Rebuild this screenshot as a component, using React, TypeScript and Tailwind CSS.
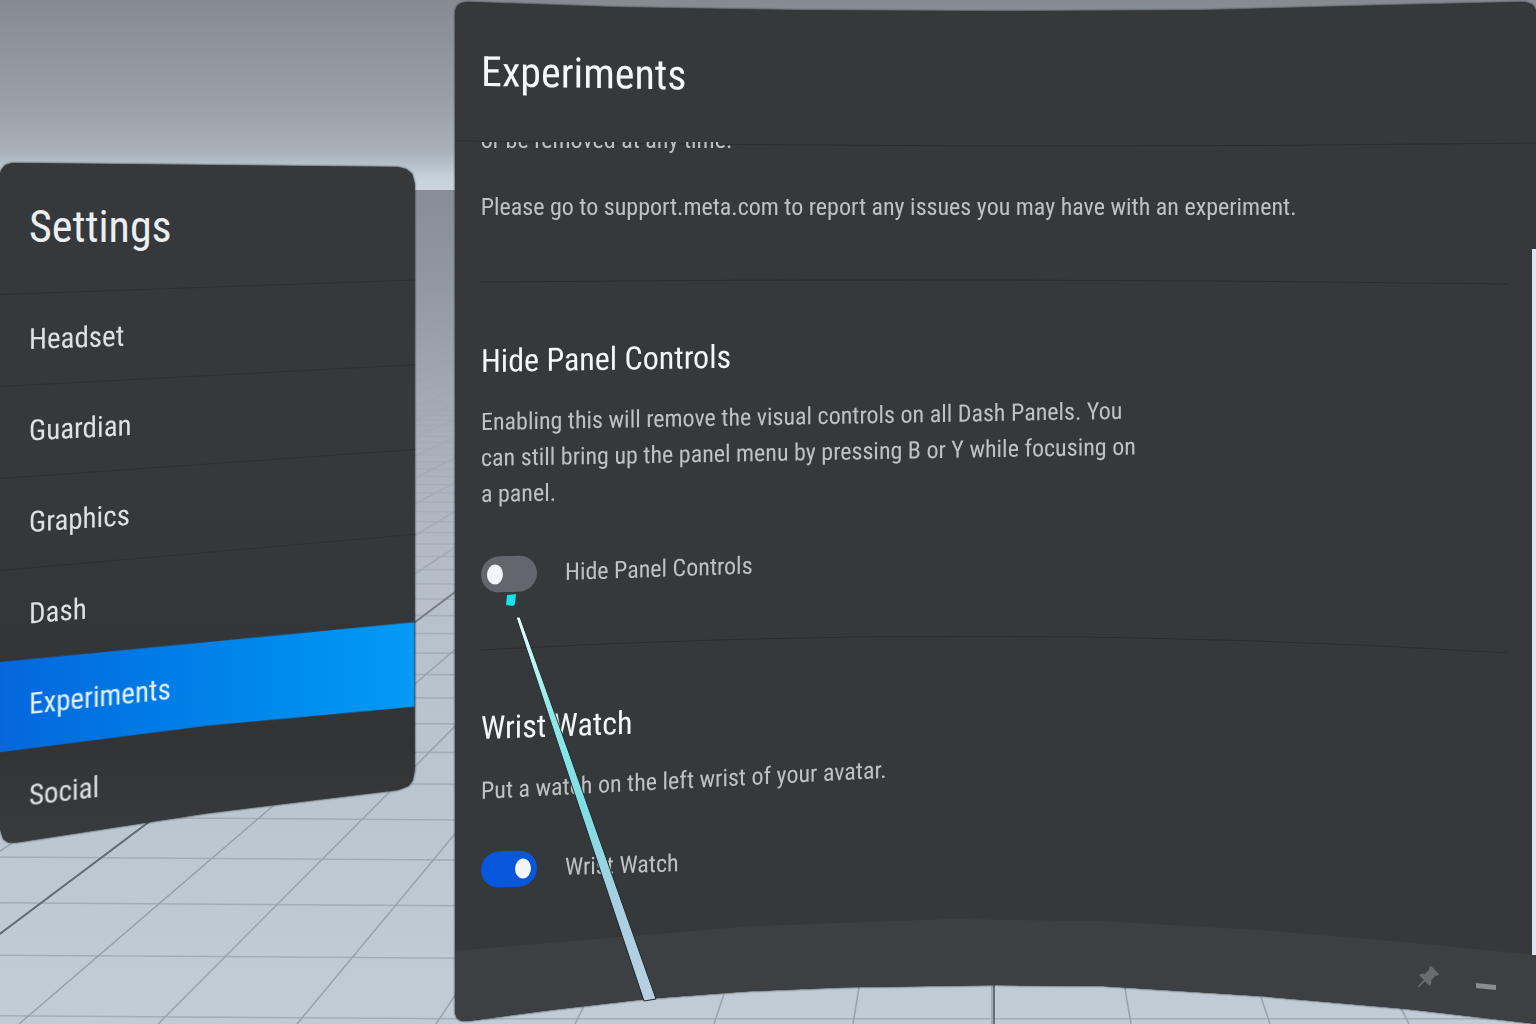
import { useState } from 'react';
import { BsPinAngleFill } from 'react-icons/bs';

const navItems = [
    { label: 'Headset', tilt: '-skew-y-2' },
    { label: 'Guardian', tilt: '-skew-y-3' },
    { label: 'Graphics', tilt: '-skew-y-4' },
    { label: 'Dash', tilt: '-skew-y-5' },
    { label: 'Experiments', tilt: '-skew-y-6' },
    { label: 'Social', tilt: '-skew-y-7' },
];

// floor grid: every depth line meets at (990, 190)
const depthLines = Array.from({ length: 61 }, (_, i) => 992 + (i - 30) * 139);
const crossLines = Array.from({ length: 36 }, (_, k) => 190 + 1 / (0.001208 + 0.0000955 * k));

function Room() {
    return (
        <svg className="absolute inset-0 h-full w-full" viewBox="0 0 1536 1024" preserveAspectRatio="none" aria-hidden="true">
            <defs>
                <linearGradient id="sky" x1="0" y1="0" x2="0" y2="1">
                    <stop offset="0" stopColor="#858b91" />
                    <stop offset="0.5" stopColor="#979ea4" />
                    <stop offset="0.8" stopColor="#a9b2b9" />
                    <stop offset="0.93" stopColor="#c6d1d9" />
                    <stop offset="1" stopColor="#cad6de" />
                </linearGradient>
                <linearGradient id="floor" x1="0" y1="0" x2="0" y2="1">
                    <stop offset="0" stopColor="#868d95" />
                    <stop offset="0.12" stopColor="#9299a2" />
                    <stop offset="0.3" stopColor="#a8b0ba" />
                    <stop offset="0.5" stopColor="#b7c0cb" />
                    <stop offset="1" stopColor="#c1ccd7" />
                </linearGradient>
                <linearGradient id="fade" x1="0" y1="0" x2="0" y2="1">
                    <stop offset="0.15" stopColor="#000" />
                    <stop offset="0.6" stopColor="#fff" />
                </linearGradient>
                <mask id="far">
                    <rect y="190" width="1536" height="834" fill="url(#fade)" />
                </mask>
            </defs>
            <rect width="1536" height="191" fill="url(#sky)" />
            <rect y="190" width="1536" height="834" fill="url(#floor)" />
            <g mask="url(#far)" stroke="#98a1aa" strokeWidth="1.5" fill="none">
                {depthLines.map((x) => (
                    <path key={x} d={`M990 190 L${x} 1024`} />
                ))}
                {crossLines.map((y) => (
                    <path key={y} d={`M0 ${y - 2} L460 ${y + 1} H1536`} opacity="0.7" />
                ))}
                <path d="M990 190 L-120 1024 M994 190 V1024" stroke="#666d74" strokeWidth="2" />
            </g>
        </svg>
    );
}

function CurvedRule({ d }: { d: string }) {
    return (
        <svg className="block h-5 w-full" viewBox="0 0 1000 20" preserveAspectRatio="none" aria-hidden="true">
            <path d={d} fill="none" stroke="#2a2d30" strokeWidth="1" vectorEffect="non-scaling-stroke" />
        </svg>
    );
}

interface ToggleProps {
    label: string;
    checked: boolean;
    onChange: (value: boolean) => void;
}

function Toggle({ label, checked, onChange }: ToggleProps) {
    return (
        <label className="flex w-fit origin-left -skew-y-2 cursor-pointer items-center gap-7 text-2xl text-[#bfc2c5]">
            <input
                type="checkbox"
                role="switch"
                checked={checked}
                onChange={(e) => onChange(e.target.checked)}
                className="flex h-9 w-14 appearance-none items-center rounded-full bg-[#63666d] px-[6px] before:block before:h-5 before:w-4 before:rounded-[50%] before:bg-[#f2f5fa] checked:justify-end checked:bg-[#0757dc]"
            />
            {label}
        </label>
    );
}

function SettingsNav() {
    const [active, setActive] = useState('Experiments');
    const activeIndex = navItems.findIndex((item) => item.label === active);

    return (
        <aside className="mt-[163px] w-[27%] shrink-0 drop-shadow-[0_0_1px_#0c1013]">
            <div className="bg-linear-to-b from-[#35393c] from-50% via-[#323334] via-85% to-[#383c3e] [clip-path:polygon(0_1.5%,0.4%_0.9%,1.3%_0.3%,3%_0,96%_0.6%,98%_0.9%,99.4%_1.6%,100%_3%,100%_89%,99.5%_90.4%,98.5%_91.2%,96%_91.8%,50%_95.2%,4%_99.5%,2%_99.5%,0.8%_99%,0_97.5%)]">
                <h2 className="h-[131px] pt-9 pl-[29px] text-[44px] leading-14 text-[#eceff1]">Settings</h2>
                <nav>
                    <ul>
                        {navItems.map((item, i) => (
                            <li key={item.label} className={`origin-left ${item.tilt}`}>
                                <button
                                    type="button"
                                    onClick={() => setActive(item.label)}
                                    className={
                                        item.label === active
                                            ? 'flex h-[92px] w-full items-center bg-linear-to-r from-[#0567db] to-[#039bf6] pl-[29px] text-[29px] text-[#e4f1fd] [clip-path:polygon(0_0,100%_4%,100%_96%,50%_93%,0_98%)]'
                                            : `flex h-[92px] w-full items-center pl-[29px] text-[29px] text-[#dee1e3] ${i === activeIndex + 1 ? '' : 'border-t border-[#2d3033]'}`
                                    }
                                >
                                    {item.label}
                                </button>
                            </li>
                        ))}
                    </ul>
                </nav>
            </div>
        </aside>
    );
}

function ExperimentsPanel() {
    const [hideControls, setHideControls] = useState(false);
    const [wristWatch, setWristWatch] = useState(true);

    return (
        <main className="relative min-w-0 flex-1 drop-shadow-[0_0_1px_#0c1013]">
            <div className="flex min-h-screen flex-col bg-[#35393c] [clip-path:polygon(0_1.2%,0.2%_0.6%,0.6%_0.3%,1.2%_0.2%,15%_0.7%,32%_1%,50%_1.1%,69%_1%,87%_0.5%,99%_0.2%,99.7%_0.5%,100%_1%,100%_100%,99.4%_99.9%,88%_98.5%,75%_97.3%,60%_96.3%,50%_96.2%,36%_96.4%,27%_96.8%,18%_97.5%,9%_98.6%,1.2%_99.7%,0.6%_99.7%,0.2%_99.4%,0_98.8%)]">
                <header className="h-[134px] pt-11 pl-[26px]">
                    <h1 className="w-fit origin-left skew-y-1 text-[42px] leading-14 text-[#f4f6f8]">Experiments</h1>
                </header>
                <CurvedRule d="M0 7 Q500 16 1000 9" />
                <div className="-mt-3 flex-1 overflow-hidden pr-7 pl-[26px] text-2xl leading-9 text-[#bfc2c5]">
                    <p className="-mt-5">or be removed at any time.</p>
                    <p className="mt-[31px]">Please go to support.meta.com to report any issues you may have with an experiment.</p>
                    <div className="mt-[47px]">
                        <CurvedRule d="M0 10 Q500 5 1000 12" />
                    </div>
                    <section className="mt-[49px]">
                        <h2 className="w-fit origin-left -skew-y-1 text-[32px] leading-10 text-[#f4f6f8]">Hide Panel Controls</h2>
                        <p className="mt-[23px] max-w-[668px] origin-left -skew-y-1">
                            Enabling this will remove the visual controls on all Dash Panels. You can still bring up the panel menu by pressing B or Y while focusing on a panel.
                        </p>
                        <div className="mt-[45px]">
                            <Toggle label="Hide Panel Controls" checked={hideControls} onChange={setHideControls} />
                        </div>
                    </section>
                    <div className="mt-10">
                        <CurvedRule d="M0 17 Q500 -12 1000 20" />
                    </div>
                    <section className="mt-[55px]">
                        <h2 className="w-fit origin-left -skew-y-2 text-[32px] leading-10 text-[#f4f6f8]">Wrist Watch</h2>
                        <p className="mt-[25px] w-fit origin-left -skew-y-3">Put a watch on the left wrist of your avatar.</p>
                        <div className="mt-[43px]">
                            <Toggle label="Wrist Watch" checked={wristWatch} onChange={setWristWatch} />
                        </div>
                    </section>
                </div>
                <footer className="flex h-[106px] items-center justify-end gap-9 bg-[#3c4043] pt-3 pr-10 [clip-path:polygon(0_31%,27%_8%,46%_1%,60%_3%,74%_11%,87%_22%,100%_35%,100%_100%,0_100%)]">
                    <button type="button" aria-label="Pin panel" className="text-[#696c6f]">
                        <BsPinAngleFill className="size-6" />
                    </button>
                    <button type="button" aria-label="Minimize" className="flex h-8 items-end pb-1">
                        <span className="block h-[5px] w-5 skew-y-6 bg-[#8b8e91]" />
                    </button>
                </footer>
            </div>
            <div className="absolute top-[249px] right-0 h-[706px] w-1 bg-[#dde6ee]" />
        </main>
    );
}

function Pointer() {
    return (
        <svg className="pointer-events-none absolute top-[592px] left-[502px] h-[410px] w-[156px]" viewBox="0 0 156 410" aria-hidden="true">
            <defs>
                <linearGradient id="beam" x1="0" y1="0" x2="0" y2="1">
                    <stop offset="0" stopColor="#e6fdfb" />
                    <stop offset="0.25" stopColor="#8ee9e6" />
                    <stop offset="0.5" stopColor="#7fdde4" />
                    <stop offset="0.75" stopColor="#a9cfe2" />
                    <stop offset="1" stopColor="#b9cfe3" />
                </linearGradient>
            </defs>
            <path d="M5 3 L14 2 L13 12 L11 14 L4 13 Z" fill="#14e3ea" />
            <path d="M14 25 L18 25 L67 161 L154 407 L142 409 L59 161 Z" fill="url(#beam)" stroke="#20292d" strokeWidth="1" />
        </svg>
    );
}

export default function App() {
    return (
        <div className="relative flex min-h-screen items-start gap-10 overflow-hidden bg-[#a9b2b9] font-['Roboto_Condensed','Roboto','Open_Sans',sans-serif]">
            <Room />
            <SettingsNav />
            <ExperimentsPanel />
            <Pointer />
        </div>
    );
}
